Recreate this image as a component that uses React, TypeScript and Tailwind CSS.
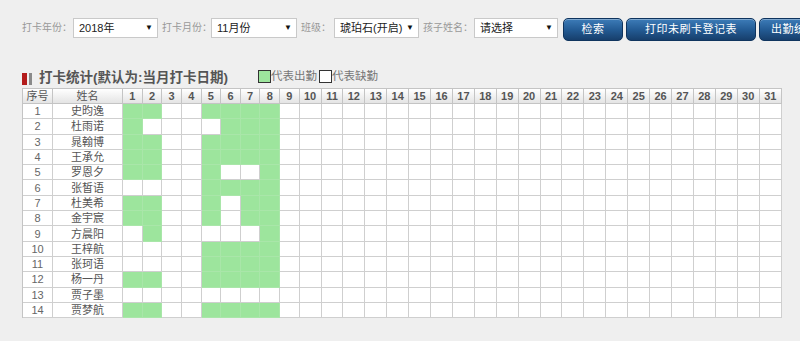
import React from "react";

const names = [
  "史昀逸",
  "杜雨诺",
  "晁翰博",
  "王承允",
  "罗恩夕",
  "张皙语",
  "杜美希",
  "金宇宸",
  "方晨阳",
  "王梓航",
  "张珂语",
  "杨一丹",
  "贾子墨",
  "贾梦航",
];

// days with a check-in, per child
const present: number[][] = [
  [1, 2, 5, 6, 7, 8],
  [1, 6, 7, 8],
  [1, 2, 5, 6, 7, 8],
  [1, 2, 5, 6, 7, 8],
  [1, 2, 5, 8],
  [5, 6, 7, 8],
  [1, 2, 5, 7, 8],
  [1, 2, 5, 7, 8],
  [2, 8],
  [5, 6, 7, 8],
  [5, 6, 7, 8],
  [1, 2, 5, 6, 7, 8],
  [],
  [1, 2, 5, 6, 7, 8],
];

const days = Array.from({ length: 31 }, (_, i) => i + 1);

const cjk = "font-['Liberation_Sans','Noto_Sans_CJK_SC',sans-serif]";

function FakeSelect({ value, width }: { value: string; width: string }) {
  return (
    <div
      className={`${width} h-[20px] shrink-0 bg-white border border-[#c9c9c9] flex items-center justify-between pl-[5px] pr-[4px] text-[11px] text-[#222]`}
    >
      <span>{value}</span>
      <span className="text-[8px] text-[#111]">▼</span>
    </div>
  );
}

function Label({ text, width }: { text: string; width: string }) {
  return (
    <span className={`${width} shrink-0 h-[20px] leading-[20px] text-[10px] text-[#999] pl-[4px]`}>{text}</span>
  );
}

function BlueButton({ title, width }: { title: string; width: string }) {
  return (
    <button
      type="button"
      className={`${width} h-[23px] shrink-0 rounded-[5px] border border-[#0f345e] bg-gradient-to-b from-[#3d7cb8] via-[#245c95] to-[#173f6c] text-white text-[11px] tracking-[0.5px] shadow-[inset_0_1px_0_rgba(255,255,255,0.35)]`}
    >
      {title}
    </button>
  );
}

export default function App() {
  return (
    <div className={`w-[800px] h-[341px] overflow-hidden bg-[#efefef] ${cjk}`}>
      <div className="flex items-start whitespace-nowrap pt-[18px] pl-[18px]">
        <Label text="打卡年份：" width="w-[55px]" />
        <FakeSelect value="2018年" width="w-[85px]" />
        <Label text="打卡月份：" width="w-[53px]" />
        <FakeSelect value="11月份" width="w-[86px]" />
        <Label text="班级：" width="w-[37px]" />
        <FakeSelect value="琥珀石(开启)" width="w-[85px]" />
        <Label text="孩子姓名：" width="w-[55px]" />
        <FakeSelect value="请选择" width="w-[84px]" />
        <div className="flex gap-[3px] ml-[5px]">
          <BlueButton title="检索" width="w-[60px]" />
          <BlueButton title="打印未刷卡登记表" width="w-[130px]" />
          <BlueButton title="出勤统计" width="w-[70px]" />
        </div>
      </div>

      <div className="flex items-center h-[19px] mt-[28px] pl-[22px]">
        <span className="w-[5px] h-[12px] bg-[#b31b1b]" />
        <span className="w-[3px] h-[12px] bg-[#8a8a8a] ml-[2px]" />
        <span className="ml-[7px] text-[13.5px] font-bold text-[#555]">打卡统计(默认为:当月打卡日期)</span>
        <span className="self-start mt-[1px] ml-[30px] w-[13px] h-[13px] border border-[#333] bg-[#9de59d]" />
        <span className="self-start -mt-[1px] text-[11.5px] text-[#777]">代表出勤</span>
        <span className="self-start mt-[1px] ml-[2px] w-[13px] h-[13px] border border-[#333] bg-white" />
        <span className="self-start -mt-[1px] text-[11.5px] text-[#777]">代表缺勤</span>
      </div>

      <table className="ml-[22px] w-[760px] table-fixed border-separate border-spacing-0 border-l border-t border-[#c4c4c4]">
        <colgroup>
          <col className="w-[30px]" />
          <col className="w-[70px]" />
          {days.map((d) => (
            <col key={d} className={d < 10 ? "w-[19.6px]" : "w-[21.9px]"} />
          ))}
        </colgroup>
        <thead>
          <tr className="h-[15px]">
            <th className="p-0 border-r border-b border-[#c4c4c4] bg-gradient-to-b from-white to-[#e4e4e4] text-[11px] font-normal text-[#555] leading-[14px]">
              序号
            </th>
            <th className="p-0 border-r border-b border-[#c4c4c4] bg-gradient-to-b from-white to-[#e4e4e4] text-[11px] font-normal text-[#555] leading-[14px]">
              姓名
            </th>
            {days.map((d) => (
              <th
                key={d}
                className="p-0 border-r border-b border-[#c4c4c4] bg-gradient-to-b from-white to-[#e4e4e4] text-[11px] font-bold text-[#555] leading-[14px]"
              >
                {d}
              </th>
            ))}
          </tr>
        </thead>
        <tbody>
          {names.map((name, i) => (
            <tr key={name} className="h-[15.3px]">
              <td className="p-0 border-r border-b border-[#cfcfcf] bg-white text-center text-[11px] text-[#666] leading-[14px]">
                {i + 1}
              </td>
              <td className="p-0 border-r border-b border-[#cfcfcf] bg-white text-center text-[11px] text-[#555] leading-[14px]">
                {name}
              </td>
              {days.map((d) =>
                present[i].includes(d) ? (
                  <td key={d} className="p-0 border-r border-b border-[#a9e6a9] bg-[#9de59d]" />
                ) : (
                  <td key={d} className="p-0 border-r border-b border-[#cfcfcf] bg-white" />
                ),
              )}
            </tr>
          ))}
        </tbody>
      </table>
    </div>
  );
}
